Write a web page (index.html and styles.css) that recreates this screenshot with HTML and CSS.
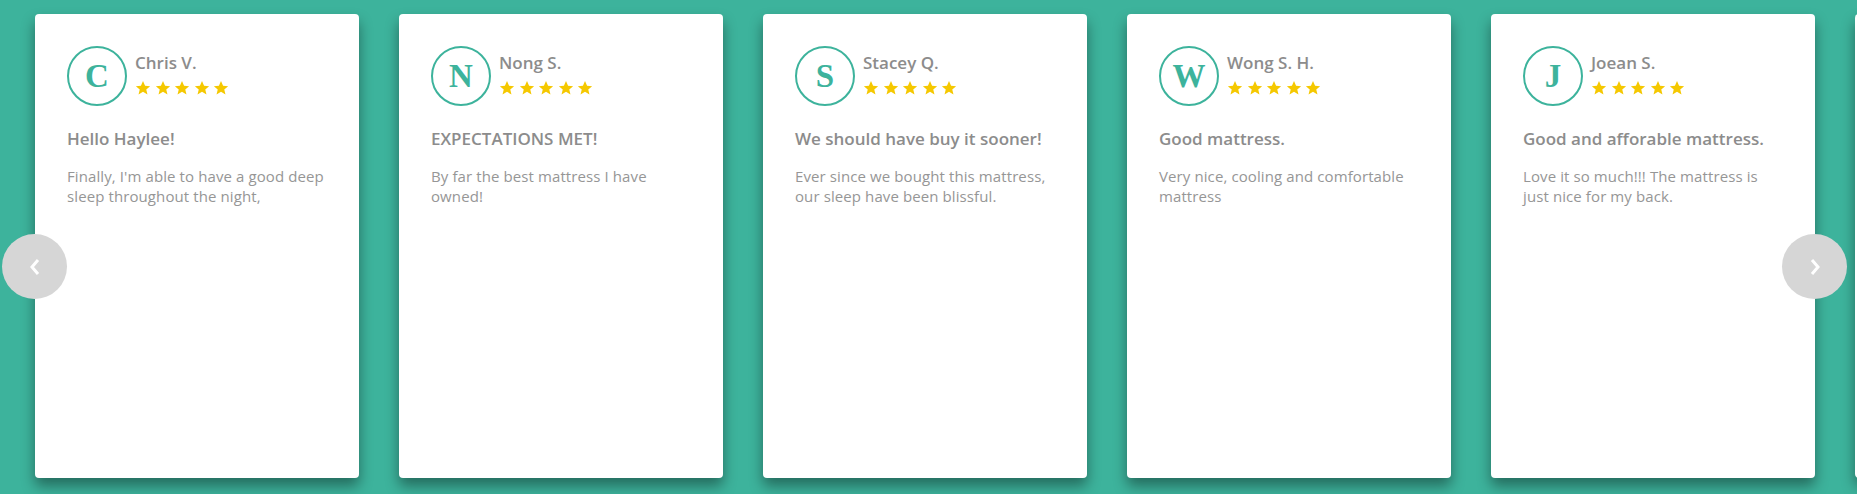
FILE: index.html
```html
<!DOCTYPE html>
<html>
<head>
<meta charset="utf-8">
<link rel="stylesheet" href="styles.css">
</head>
<body>
<div class="slider">
  <div class="track">
    <div class="card">
      <div class="head">
        <div class="avatar">C</div>
        <div class="who">
          <div class="name">Chris V.</div>
          <div class="stars"><svg viewBox="0 0 24 24"><path d="M12 1.5l3.1 7.1 7.6.6-5.8 5 1.8 7.5L12 17.7l-6.7 4 1.8-7.5-5.8-5 7.6-.6z"/></svg><svg viewBox="0 0 24 24"><path d="M12 1.5l3.1 7.1 7.6.6-5.8 5 1.8 7.5L12 17.7l-6.7 4 1.8-7.5-5.8-5 7.6-.6z"/></svg><svg viewBox="0 0 24 24"><path d="M12 1.5l3.1 7.1 7.6.6-5.8 5 1.8 7.5L12 17.7l-6.7 4 1.8-7.5-5.8-5 7.6-.6z"/></svg><svg viewBox="0 0 24 24"><path d="M12 1.5l3.1 7.1 7.6.6-5.8 5 1.8 7.5L12 17.7l-6.7 4 1.8-7.5-5.8-5 7.6-.6z"/></svg><svg viewBox="0 0 24 24"><path d="M12 1.5l3.1 7.1 7.6.6-5.8 5 1.8 7.5L12 17.7l-6.7 4 1.8-7.5-5.8-5 7.6-.6z"/></svg></div>
        </div>
      </div>
      <h3 class="title">Hello Haylee!</h3>
      <p class="text">Finally, I'm able to have a good deep sleep throughout the night,</p>
    </div>
    <div class="card">
      <div class="head">
        <div class="avatar">N</div>
        <div class="who">
          <div class="name">Nong S.</div>
          <div class="stars"><svg viewBox="0 0 24 24"><path d="M12 1.5l3.1 7.1 7.6.6-5.8 5 1.8 7.5L12 17.7l-6.7 4 1.8-7.5-5.8-5 7.6-.6z"/></svg><svg viewBox="0 0 24 24"><path d="M12 1.5l3.1 7.1 7.6.6-5.8 5 1.8 7.5L12 17.7l-6.7 4 1.8-7.5-5.8-5 7.6-.6z"/></svg><svg viewBox="0 0 24 24"><path d="M12 1.5l3.1 7.1 7.6.6-5.8 5 1.8 7.5L12 17.7l-6.7 4 1.8-7.5-5.8-5 7.6-.6z"/></svg><svg viewBox="0 0 24 24"><path d="M12 1.5l3.1 7.1 7.6.6-5.8 5 1.8 7.5L12 17.7l-6.7 4 1.8-7.5-5.8-5 7.6-.6z"/></svg><svg viewBox="0 0 24 24"><path d="M12 1.5l3.1 7.1 7.6.6-5.8 5 1.8 7.5L12 17.7l-6.7 4 1.8-7.5-5.8-5 7.6-.6z"/></svg></div>
        </div>
      </div>
      <h3 class="title">EXPECTATIONS MET!</h3>
      <p class="text">By far the best mattress I have owned!</p>
    </div>
    <div class="card">
      <div class="head">
        <div class="avatar">S</div>
        <div class="who">
          <div class="name">Stacey Q.</div>
          <div class="stars"><svg viewBox="0 0 24 24"><path d="M12 1.5l3.1 7.1 7.6.6-5.8 5 1.8 7.5L12 17.7l-6.7 4 1.8-7.5-5.8-5 7.6-.6z"/></svg><svg viewBox="0 0 24 24"><path d="M12 1.5l3.1 7.1 7.6.6-5.8 5 1.8 7.5L12 17.7l-6.7 4 1.8-7.5-5.8-5 7.6-.6z"/></svg><svg viewBox="0 0 24 24"><path d="M12 1.5l3.1 7.1 7.6.6-5.8 5 1.8 7.5L12 17.7l-6.7 4 1.8-7.5-5.8-5 7.6-.6z"/></svg><svg viewBox="0 0 24 24"><path d="M12 1.5l3.1 7.1 7.6.6-5.8 5 1.8 7.5L12 17.7l-6.7 4 1.8-7.5-5.8-5 7.6-.6z"/></svg><svg viewBox="0 0 24 24"><path d="M12 1.5l3.1 7.1 7.6.6-5.8 5 1.8 7.5L12 17.7l-6.7 4 1.8-7.5-5.8-5 7.6-.6z"/></svg></div>
        </div>
      </div>
      <h3 class="title">We should have buy it sooner!</h3>
      <p class="text">Ever since we bought this mattress, our sleep have been blissful.</p>
    </div>
    <div class="card">
      <div class="head">
        <div class="avatar">W</div>
        <div class="who">
          <div class="name">Wong S. H.</div>
          <div class="stars"><svg viewBox="0 0 24 24"><path d="M12 1.5l3.1 7.1 7.6.6-5.8 5 1.8 7.5L12 17.7l-6.7 4 1.8-7.5-5.8-5 7.6-.6z"/></svg><svg viewBox="0 0 24 24"><path d="M12 1.5l3.1 7.1 7.6.6-5.8 5 1.8 7.5L12 17.7l-6.7 4 1.8-7.5-5.8-5 7.6-.6z"/></svg><svg viewBox="0 0 24 24"><path d="M12 1.5l3.1 7.1 7.6.6-5.8 5 1.8 7.5L12 17.7l-6.7 4 1.8-7.5-5.8-5 7.6-.6z"/></svg><svg viewBox="0 0 24 24"><path d="M12 1.5l3.1 7.1 7.6.6-5.8 5 1.8 7.5L12 17.7l-6.7 4 1.8-7.5-5.8-5 7.6-.6z"/></svg><svg viewBox="0 0 24 24"><path d="M12 1.5l3.1 7.1 7.6.6-5.8 5 1.8 7.5L12 17.7l-6.7 4 1.8-7.5-5.8-5 7.6-.6z"/></svg></div>
        </div>
      </div>
      <h3 class="title">Good mattress.</h3>
      <p class="text">Very nice, cooling and comfortable mattress</p>
    </div>
    <div class="card">
      <div class="head">
        <div class="avatar">J</div>
        <div class="who">
          <div class="name">Joean S.</div>
          <div class="stars"><svg viewBox="0 0 24 24"><path d="M12 1.5l3.1 7.1 7.6.6-5.8 5 1.8 7.5L12 17.7l-6.7 4 1.8-7.5-5.8-5 7.6-.6z"/></svg><svg viewBox="0 0 24 24"><path d="M12 1.5l3.1 7.1 7.6.6-5.8 5 1.8 7.5L12 17.7l-6.7 4 1.8-7.5-5.8-5 7.6-.6z"/></svg><svg viewBox="0 0 24 24"><path d="M12 1.5l3.1 7.1 7.6.6-5.8 5 1.8 7.5L12 17.7l-6.7 4 1.8-7.5-5.8-5 7.6-.6z"/></svg><svg viewBox="0 0 24 24"><path d="M12 1.5l3.1 7.1 7.6.6-5.8 5 1.8 7.5L12 17.7l-6.7 4 1.8-7.5-5.8-5 7.6-.6z"/></svg><svg viewBox="0 0 24 24"><path d="M12 1.5l3.1 7.1 7.6.6-5.8 5 1.8 7.5L12 17.7l-6.7 4 1.8-7.5-5.8-5 7.6-.6z"/></svg></div>
        </div>
      </div>
      <h3 class="title">Good and afforable mattress.</h3>
      <p class="text">Love it so much!!! The mattress is just nice for my back.</p>
    </div>
    <div class="card"></div>
  </div>
  <button class="arrow arrow-prev" aria-label="Previous"><svg viewBox="0 0 10 18"><polyline points="8,2 2,9 8,16"/></svg></button>
  <button class="arrow arrow-next" aria-label="Next"><svg viewBox="0 0 10 18"><polyline points="2,2 8,9 2,16"/></svg></button>
</div>
</body>
</html>
```

FILE: styles.css
```css
* { box-sizing: border-box; }
html, body {
  margin: 0;
  padding: 0;
  height: 494px;
  overflow: hidden;
  background: #3db39c;
  font-family: "Open Sans", "Liberation Sans", sans-serif;
}
.slider {
  position: relative;
  width: 1857px;
  height: 494px;
  overflow: hidden;
}
.track {
  display: flex;
  gap: 40px;
  padding: 14px 0 0 35px;
}
.card {
  flex: 0 0 324px;
  height: 464px;
  background: #fff;
  border-radius: 4px;
  padding: 32px 32px;
  box-shadow: 0 8px 14px rgba(0, 0, 0, 0.4);
}
.head {
  display: flex;
  align-items: flex-start;
  gap: 8px;
}
.avatar {
  flex: 0 0 60px;
  width: 60px;
  height: 60px;
  border: 2px solid #3db39c;
  border-radius: 50%;
  display: flex;
  align-items: center;
  justify-content: center;
  color: #3db39c;
  font-family: "Liberation Serif", "DejaVu Serif", serif;
  font-weight: bold;
  font-size: 33px;
  line-height: 1;
}
.who {
  display: flex;
  flex-direction: column;
  gap: 6px;
  margin-top: 6px;
}
.name {
  font-size: 17px;
  font-weight: 600;
  color: #8c8c8c;
  line-height: 22px;
}
.stars {
  display: flex;
  gap: 3.5px;
}
.stars svg {
  width: 16px;
  height: 16px;
  fill: #f5c800;
}
.title {
  margin: 21px 0 0;
  font-size: 17px;
  font-weight: 600;
  color: #8c8c8c;
  line-height: 24px;
}
.text {
  margin: 15px 0 0;
  font-size: 15px;
  line-height: 20px;
  letter-spacing: 0.1px;
  color: #969696;
}
.arrow {
  position: absolute;
  top: 234px;
  width: 65px;
  height: 65px;
  border: 0;
  padding: 0;
  border-radius: 50%;
  background: #d6d6d6;
  display: flex;
  align-items: center;
  justify-content: center;
}
.arrow svg {
  width: 10px;
  height: 18px;
  fill: none;
  stroke: #fff;
  stroke-width: 3;
}
.arrow-prev { left: 2px; }
.arrow-next { left: 1782px; }
```
